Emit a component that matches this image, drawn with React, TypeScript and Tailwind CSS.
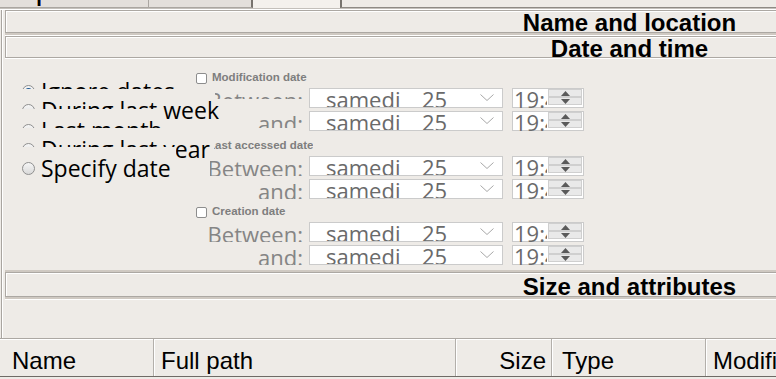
import React from "react";

type RadioRow = { label: string; cls: string; checked?: boolean };

const radioRows: RadioRow[] = [
  { label: "Ignore dates", cls: "w-[160px] h-[19px]", checked: true },
  { label: "During last week", cls: "w-[158px] h-[20px]" },
  { label: "Last month", cls: "w-[143px] h-[19px]" },
  { label: "During last year", cls: "w-[145px] h-[19px]" },
  { label: "Specify date", cls: "w-[158px] h-[33px]" },
];

type DateRow = { label: string; clip: string };
type Group = { title: string; head: string; checkbox: boolean; rows: DateRow[] };

const groups: Group[] = [
  {
    title: "Modification date",
    head: "mt-[13px]",
    checkbox: true,
    rows: [
      { label: "Between:", clip: "w-[88px] h-[11px]" },
      { label: "and:", clip: "w-[88px] h-[17px]" },
    ],
  },
  {
    title: "Last accessed date",
    head: "mt-[8px]",
    checkbox: false,
    rows: [
      { label: "Between:", clip: "w-[93px] h-[20px]" },
      { label: "and:", clip: "w-[93px] h-[20px]" },
    ],
  },
  {
    title: "Creation date",
    head: "mt-[6px]",
    checkbox: true,
    rows: [
      { label: "Between:", clip: "w-[100px] h-[20px]" },
      { label: "and:", clip: "w-[100px] h-[20px]" },
    ],
  },
];

const Radio = ({ checked }: { checked?: boolean }) => (
  <span className="mt-[15px] flex h-[13px] w-[13px] shrink-0 items-center justify-center rounded-full border border-[#8f8f8f] bg-linear-to-b from-[#f6f6f6] to-[#d9d9d9]">
    {checked && <span className="h-[7px] w-[7px] rounded-full bg-[#1e5a94]" />}
  </span>
);

const Header = ({ text, cls }: { text: string; cls: string }) => (
  <div
    className={`${cls} mx-[3px] flex justify-center border border-[#aca8a3] shadow-[inset_1px_1px_0_#ffffff,0_1px_0_#ffffff] font-['Liberation_Sans',Arial,sans-serif] text-[24px] font-bold leading-[24px] text-black`}
  >
    {text}
  </div>
);

const Combo = () => (
  <div className="flex h-[20px] w-[194px] items-start overflow-hidden border border-[#cbcbcb] bg-white text-[22px] leading-[20px] text-[#6a6a6a]">
    <span className="ml-[16px] w-[96px] shrink-0">samedi</span>
    <span className="shrink-0">25</span>
    <svg className="ml-auto mr-[8px] mt-[5px] shrink-0" width="14" height="7" viewBox="0 0 14 7">
      <polyline points="0.5,0.5 7,6.5 13.5,0.5" fill="none" stroke="#a8a8a8" strokeWidth="1" />
    </svg>
  </div>
);

const Spin = ({ up }: { up?: boolean }) => (
  <div className="flex h-[8px] items-center justify-center border border-[#cfcfcf] bg-[#e9e9e9]">
    <svg width="9" height="5" viewBox="0 0 9 5">
      <polygon points={up ? "0,5 4.5,0 9,5" : "0,0 4.5,5 9,0"} fill="#5a5a5a" />
    </svg>
  </div>
);

const TimeBox = () => (
  <div className="ml-[9px] flex h-[20px] w-[72px] items-start border border-[#cbcbcb] bg-white">
    <div className="w-[34px] shrink-0 overflow-hidden whitespace-nowrap pl-[1px] text-[22px] leading-[20px] text-[#6a6a6a]">
      19:45
    </div>
    <div className="ml-auto mr-[1px] flex w-[34px] flex-col">
      <Spin up />
      <Spin />
    </div>
  </div>
);

const DateRowView = ({ row }: { row: DateRow }) => (
  <div className="mt-[3px] flex h-[20px]">
    <div className="flex w-[108px] items-start justify-end">
      <div className={`${row.clip} flex justify-end overflow-hidden whitespace-nowrap text-[22px] leading-[25px] text-[#858585]`}>
        <span className="shrink-0">{row.label}</span>
      </div>
    </div>
    <div className="ml-[6px]">
      <Combo />
    </div>
    <TimeBox />
  </div>
);

const Column = ({ title, cls }: { title: string; cls: string }) => (
  <div className={`${cls} h-full shrink-0 whitespace-nowrap border-r border-[#b3afaa] pt-[8px] shadow-[1px_0_0_#ffffff]`}>
    {title}
  </div>
);

export default function App() {
  return (
    <div className="relative h-[379px] w-[776px] overflow-hidden bg-[#eeebe7] font-['Open_Sans',sans-serif]">
      {/* tab strip */}
      <div className="flex h-[8px] w-[1260px]">
        <div className="w-[149px] border-r border-b border-[#aaa6a1] bg-[#e3dfdb]">
          <span className="ml-[37px] block h-[6px] w-[4px] border-l border-r border-l-[#d08a3c] border-r-[#3d6fc4] bg-black" />
        </div>
        <div className="w-[104px] border-r-2 border-b border-r-[#77736e] border-b-[#aaa6a1] bg-[#e3dfdb]" />
        <div className="w-[87px] bg-[#f4f1ed]" />
        <div className="flex-1 border-l-2 border-b border-l-[#77736e] border-b-[#8e8a85] bg-[#eeebe7]" />
      </div>
      <div className="h-[1px] w-[1260px] bg-[#c4c0bb]" />
      <div className="h-[1px] w-[1260px] bg-white" />

      {/* panel */}
      <div className="ml-[1px] w-[1256px] border-l border-[#a9a5a0] shadow-[inset_1px_0_0_#ffffff]">
        <Header text="Name and location" cls="h-[23px]" />
        <div className="mx-[3px] h-[3px] border-b border-white bg-[#cfc9c2]" />
        <Header text="Date and time" cls="h-[22px]" />

        {/* date section */}
        <div className="flex h-[212px]">
          <div className="w-[193px] shrink-0 pl-[16px] pt-[12px]">
            {radioRows.map((r) => (
              <div key={r.label} className={`${r.cls} relative flex bg-[#eeebe7] pl-[4px]`}>
                <Radio checked={r.checked} />
                <span className="ml-[6px] mt-[7px] whitespace-nowrap text-[23px] leading-[28px] text-black">{r.label}</span>
              </div>
            ))}
          </div>
          <div className="flex flex-col">
            {groups.map((g) => (
              <div key={g.title} className="flex flex-col">
                <div className={`${g.head} flex h-[14px] items-center`}>
                  {g.checkbox ? (
                    <>
                      <span className="ml-[1px] h-[11px] w-[11px] rounded-[2px] border border-[#8d8d8d] bg-white" />
                      <span className="ml-[5px] whitespace-nowrap font-['Liberation_Sans',Arial,sans-serif] text-[11.5px] font-bold text-[#7e7e7e]">
                        {g.title}
                      </span>
                    </>
                  ) : (
                    <span className="ml-[19px] overflow-hidden whitespace-nowrap font-['Liberation_Sans',Arial,sans-serif] text-[11.5px] font-bold text-[#7e7e7e]">
                      <span className="-ml-[6px] block">{g.title}</span>
                    </span>
                  )}
                </div>
                {g.rows.map((r) => (
                  <DateRowView key={r.label} row={r} />
                ))}
              </div>
            ))}
          </div>
        </div>

        <div className="mx-[3px] h-[2px] bg-[#cfc9c2]" />
        <Header text="Size and attributes" cls="h-[25px] pt-[2px]" />
        <div className="mx-[3px] h-[3px] border-b border-white bg-[#cfc9c2]" />
        <div className="h-[38px]" />
      </div>

      {/* result list header */}
      <div className="flex h-[39px] w-[1260px] border-t border-b border-t-[#aca8a3] border-b-[#6f6b66] bg-[#eeebe7] font-['Liberation_Sans',Arial,sans-serif] text-[24px] leading-[28px] text-black shadow-[inset_0_1px_0_#ffffff]">
        <Column title="Name" cls="w-[154px] pl-[12px]" />
        <Column title="Full path" cls="w-[302px] pl-[7px]" />
        <Column title="Size" cls="w-[96px] pr-[5px] text-right" />
        <Column title="Type" cls="w-[154px] pl-[10px]" />
        <Column title="Modified" cls="w-[200px] pl-[7px]" />
      </div>
    </div>
  );
}
